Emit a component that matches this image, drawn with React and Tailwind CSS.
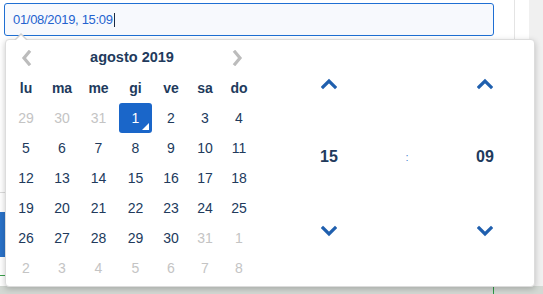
import React from 'react'

const font = { fontFamily: '"Liberation Sans", Arial, sans-serif' }

const DAY_NAMES = ['lu', 'ma', 'me', 'gi', 've', 'sa', 'do']

// 6 weeks, muted = outside current month
const WEEKS = [
  [[29, 1], [30, 1], [31, 1], [1, 0, 1], [2], [3], [4]],
  [[5], [6], [7], [8], [9], [10], [11]],
  [[12], [13], [14], [15], [16], [17], [18]],
  [[19], [20], [21], [22], [23], [24], [25]],
  [[26], [27], [28], [29], [30], [31, 1], [1, 1]],
  [[2, 1], [3, 1], [4, 1], [5, 1], [6, 1], [7, 1], [8, 1]],
]

function Chevron({ dir = 'up', className = '' }) {
  const pts = {
    up: '2,9 8,3 14,9',
    down: '2,3 8,9 14,3',
    left: '8,2 3,8 8,14',
    right: '3,2 8,8 3,14',
  }[dir]
  const horiz = dir === 'left' || dir === 'right'
  return (
    <svg width={horiz ? 11 : 16} height={horiz ? 16 : 12} viewBox={horiz ? '0 0 11 16' : '0 0 16 12'} className={className}>
      <polyline points={pts} fill="none" stroke="currentColor" strokeWidth="3.2" strokeLinecap="square" />
    </svg>
  )
}

function DayCell({ day, muted, selected }) {
  if (selected) {
    return (
      <div className="h-[30px] flex items-center justify-center">
        <div className="relative w-[33px] h-[30px] rounded-[3px] bg-[#1a66c9] text-white flex items-center justify-center">
          {day}
          <span className="absolute right-[3px] bottom-[3px] w-0 h-0 border-l-[7px] border-l-transparent border-b-[7px] border-b-white" />
        </div>
      </div>
    )
  }
  return (
    <div className={`h-[30px] flex items-center justify-center ${muted ? 'text-[#c4c4c4]' : 'text-[#213a5c]'}`}>
      {day}
    </div>
  )
}

function Calendar() {
  return (
    <div className="w-[250px] pl-[2px] pt-[6px] pb-[4px]">
      <div className="h-6 mb-[3px] flex items-center justify-between px-[13px]">
        <Chevron dir="left" className="text-[#bcbcbc]" />
        <span className="font-bold text-[14.5px] text-[#213a5c]">agosto 2019</span>
        <Chevron dir="right" className="text-[#bcbcbc]" />
      </div>
      <div className="grid grid-cols-[36px_36px_37px_37px_34px_34px_34px] text-[14px]">
        {DAY_NAMES.map(d => (
          <div key={d} className="h-[30px] flex items-center justify-center font-bold text-[#213a5c]">{d}</div>
        ))}
        {WEEKS.flat().map(([day, muted, selected], i) => (
          <DayCell key={i} day={day} muted={muted} selected={selected} />
        ))}
      </div>
    </div>
  )
}

function TimeColumn({ value }) {
  return (
    <div className="w-[78px] flex flex-col items-center text-[#1f5fae]">
      <div className="h-[14px] flex items-center"><Chevron dir="up" /></div>
      <div className="mt-[58px] h-[16px] flex items-center font-bold text-[16px] text-[#213a5c]">{value}</div>
      <div className="mt-[59px] h-[14px] flex items-center"><Chevron dir="down" /></div>
    </div>
  )
}

function TimePicker() {
  return (
    <div className="flex-1 flex pl-[34px] pt-[37px]">
      <TimeColumn value="15" />
      <div className="w-[78px] flex flex-col items-center">
        <div className="h-[14px]" />
        <div className="mt-[58px] h-[16px] flex items-center">
          <span className="text-[11px] leading-none text-[#4a86d0]">:</span>
        </div>
      </div>
      <TimeColumn value="09" />
    </div>
  )
}

export default function App() {
  return (
    <div className="relative w-[543px] h-[294px] bg-white overflow-hidden" style={font}>
      {/* page behind the picker */}
      <div className="absolute top-0 left-[514px] w-px h-full bg-[#e4e4e4]" />
      <div className="absolute top-0 left-[529px] w-[14px] h-full bg-[#f0f0f0]" />
      <div className="absolute left-0 top-[212px] w-[6px] h-[45px] bg-[#2a72c8]" />
      <div className="absolute left-0 top-[192px] w-[6px] h-px bg-[#dcdcdc]" />
      <div className="absolute left-0 top-[275px] w-[6px] h-px bg-[#3aa04a]" />
      <div className="absolute left-0 top-[286px] w-full h-[8px] bg-[#d3d8d3]" />
      <div className="absolute left-[493px] top-[286px] w-px h-[8px] bg-[#2f9a45]" />

      {/* input */}
      <div className="pt-[3px] pl-[4px]">
        <div className="w-[490px] h-[33px] rounded-[3px] border border-[#1f6fd3] bg-[#f7f9fd] flex items-center pl-[8px]">
          <span className="text-[13px] tracking-[-0.3px] text-[#2463cf]">01/08/2019, 15:09</span>
          <span className="w-px h-[14px] bg-[#1a2a44] ml-px" />
        </div>
      </div>

      {/* picker dropdown */}
      <div className="absolute left-[5px] top-[39px] w-[530px] h-[248px] bg-white rounded-[4px] border border-[#dcdcdc] shadow-[0_2px_6px_rgba(0,0,0,0.22)] flex">
        <span className="absolute left-[8px] -top-[7px] w-0 h-0 border-x-[7px] border-x-transparent border-b-[7px] border-b-[#d0d0d0]" />
        <span className="absolute left-[9px] -top-[5px] w-0 h-0 border-x-[6px] border-x-transparent border-b-[6px] border-b-white" />
        <Calendar />
        <TimePicker />
      </div>
    </div>
  )
}
